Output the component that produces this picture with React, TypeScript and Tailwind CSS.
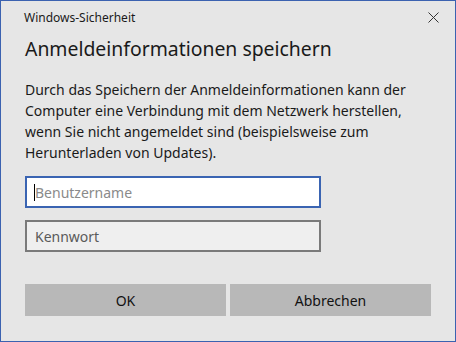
export default function App() {
  return (
    <div className="w-[456px] h-[342px] bg-[#e6e6e6] border border-[#3b62b0] flex flex-col font-['Noto_Sans',sans-serif] text-black overflow-hidden">
      {/* Titelleiste */}
      <div className="flex items-center justify-between h-[33px] pl-[23px] pr-[16px]">
        <span className="text-[12px] text-[#1a1a1a]">Windows-Sicherheit</span>
        <svg width="11" height="11" viewBox="0 0 11 11" className="text-[#333]">
          <path d="M0.5 0.5 L10.5 10.5 M10.5 0.5 L0.5 10.5" stroke="currentColor" strokeWidth="1" />
        </svg>
      </div>

      <div className="flex flex-col px-[24px]">
        <h1 className="text-[19.4px] leading-[28px] text-[#1a1a1a] mt-[1px]">
          Anmeldeinformationen speichern
        </h1>
        <p className="mt-[16px] text-[14px] leading-[21px] text-[#1a1a1a] pr-[10px]">
          Durch das Speichern der Anmeldeinformationen kann der Computer eine Verbindung mit dem Netzwerk herstellen, wenn Sie nicht angemeldet sind (beispielsweise zum Herunterladen von Updates).
        </p>

        <div className="mt-[13px] flex flex-col gap-[12px] w-[296px]">
          <div className="h-[32px] bg-white border-2 border-[#3a64b2] flex items-center pl-[7px]">
            <span className="w-px h-[17px] bg-black" />
            <span className="text-[14px] text-[#8a8a8a]">Benutzername</span>
          </div>
          <div className="h-[32px] bg-[#efefef] border-2 border-[#7a7a7a] flex items-center pl-[8px]">
            <span className="text-[14px] text-[#5a5a5a]">Kennwort</span>
          </div>
        </div>

        <div className="mt-[32px] flex gap-[4px] w-[406px]">
          <button className="flex-1 h-[32px] bg-[#b8b8b8] text-[14px] text-[#111]">OK</button>
          <button className="flex-1 h-[32px] bg-[#b8b8b8] text-[14px] text-[#111]">Abbrechen</button>
        </div>
      </div>
    </div>
  );
}
